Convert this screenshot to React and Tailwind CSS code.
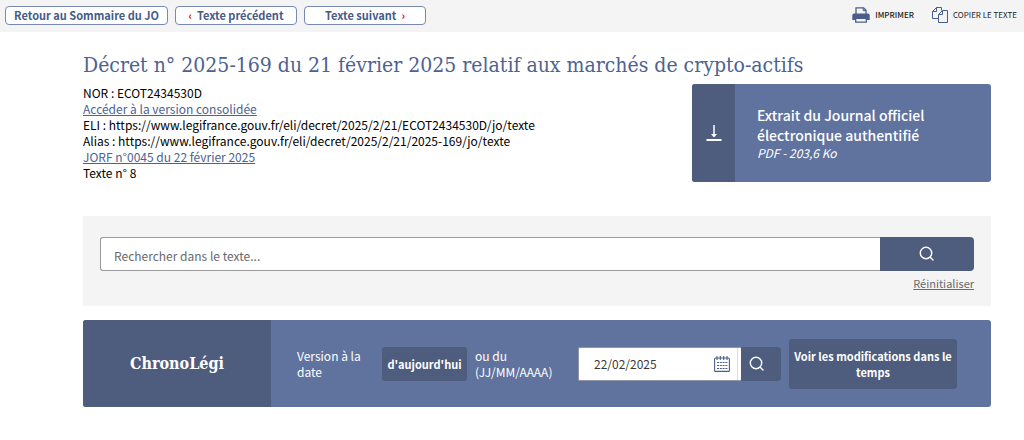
import React from "react";

const SLAB = "font-['Roboto_Slab','DejaVu_Serif_Condensed','DejaVu_Serif',serif]";

function SearchIcon({ className }) {
  return (
    <svg viewBox="0 0 16 16" className={className} fill="none" stroke="currentColor" strokeWidth="1.4" strokeLinecap="round" aria-hidden="true">
      <circle cx="7" cy="7" r="5.7" />
      <path d="M11.2 11.2 14 14" />
    </svg>
  );
}

function PrinterIcon() {
  return (
    <svg viewBox="0 0 18 16" className="h-4 w-[18px] text-[#4a5e8c]" aria-hidden="true">
      <path d="M4 7V.8h7.6L14 3.2V7" fill="#f4f4f4" stroke="currentColor" strokeWidth="1.3" />
      <path d="M11.2.8v2.8H14" fill="none" stroke="currentColor" strokeWidth="1" />
      <path d="M2 6.500h14a1.700 1.700 0 0 1 1.700 1.700v4.800H.3V8.200A1.700 1.700 0 0 1 2 6.500z" fill="currentColor" />
      <path d="M3.700 11.300h10.600v3.900H3.700z" fill="#f4f4f4" stroke="currentColor" strokeWidth="1.300" />
    </svg>
  );
}

function CopyIcon() {
  return (
    <svg viewBox="0 0 16 16" className="size-4 text-[#4a5e8c]" fill="none" stroke="currentColor" strokeWidth="1" aria-hidden="true">
      <path d="M6.500 11.500h-6v-7l4-4h5v3" />
      <path d="M4.500.5v4h-4" />
      <path d="M6.500 7.500l4-4h5v12h-9z" />
      <path d="M10.500 3.500v4h-4" />
    </svg>
  );
}

function DownloadIcon() {
  return (
    <svg viewBox="0 0 16 18" className="h-[18px] w-4" fill="none" stroke="currentColor" aria-hidden="true">
      <path d="M8 1v11" strokeWidth="1.500" />
      <path d="M5 10h6l-3 3.500z" fill="currentColor" stroke="none" />
      <path d="M.5 16h15" strokeWidth="1.800" />
    </svg>
  );
}

function CalendarIcon() {
  return (
    <svg viewBox="0 0 16 16" className="size-4 text-[#4a5e8c]" fill="none" stroke="currentColor" aria-hidden="true">
      <rect x=".6" y="2" width="14.800" height="13.400" rx="1" strokeWidth="1.100" />
      <path d="M3 0v4M6.300 0v4M9.700 0v4M13 0v4" strokeWidth="1.100" />
      <path d="M3 6.500h10.400M3 9.500h10.400M3 12.500h10.400" strokeWidth="1.200" strokeDasharray="2 .8" />
    </svg>
  );
}

function NavButton({ className, children }) {
  return (
    <button
      type="button"
      className={`flex h-[19px] items-center rounded-[4px] border border-[#7688b3] bg-white text-[11px] leading-4 font-bold text-[#465b88] ${className}`}
    >
      {children}
    </button>
  );
}

export default function App() {
  return (
    <div className="bg-white font-['Source_Sans_Pro','Noto_Sans_CJK_SC',sans-serif] text-[12px] leading-4 text-[#161616]">
      <header className="flex h-8 items-center justify-between bg-[#f4f4f4] pr-[7px] pb-0.5 pl-[5px]">
        <nav className="flex gap-[7px]" aria-label="Navigation du JO">
          <NavButton className="w-[163px] justify-end pr-2">Retour au Sommaire du JO</NavButton>
          <NavButton className="w-[122px] justify-center gap-[5px]">
            <span className="text-[#e1000f]">‹</span>Texte précédent
          </NavButton>
          <NavButton className="w-[122px] justify-center gap-[5px]">
            Texte suivant<span className="text-[#e1000f]">›</span>
          </NavButton>
        </nav>
        <div className="flex gap-[18px] text-[8px] leading-4 text-[#222]">
          <button type="button" className="flex items-center gap-[5px] font-medium">
            <PrinterIcon />
            IMPRIMER
          </button>
          <button type="button" className="flex items-center gap-[5px]">
            <CopyIcon />
            COPIER LE TEXTE
          </button>
        </div>
      </header>

      <main className="pt-[17px] pr-[33px] pb-8 pl-[83px]">
        <h1 className={`${SLAB} text-[21px] leading-8 text-[#4d6291]`}>
          Décret n° 2025-169 du 21 février 2025 relatif aux marchés de crypto-actifs
        </h1>

        <div className="mt-[3px] flex items-start justify-between gap-6">
          <div className="pt-px text-black">
            <p>NOR : ECOT2434530D</p>
            <p><a href="#consolidee" className="text-[#4d6291] underline">Accéder à la version consolidée</a></p>
            <p>ELI : https://www.legifrance.gouv.fr/eli/decret/2025/2/21/ECOT2434530D/jo/texte</p>
            <p>Alias : https://www.legifrance.gouv.fr/eli/decret/2025/2/21/2025-169/jo/texte</p>
            <p><a href="#jorf" className="text-[#4d6291] underline">JORF n°0045 du 22 février 2025</a></p>
            <p>Texte n° 8</p>
          </div>
          <a href="#pdf" className="flex h-[98px] w-[299px] shrink-0 overflow-hidden rounded-[3px] bg-[#60739e] text-white">
            <span className="flex w-[43px] items-center justify-center bg-[#4e5d7e]"><DownloadIcon /></span>
            <span className="flex flex-1 flex-col justify-center pl-[22px]">
              <span className="text-[14px] leading-5 font-medium">
                Extrait du Journal officiel
                <br />
                électronique authentifié
              </span>
              <span className="italic">PDF - 203,6 Ko</span>
            </span>
          </a>
        </div>

        <form className="mt-[34px] bg-[#f4f4f4] px-[17px] pt-[21px] pb-[14px]" onSubmit={(e) => e.preventDefault()}>
          <div className="flex h-[34px]">
            <input
              type="text"
              aria-label="Rechercher dans le texte"
              placeholder="Rechercher dans le texte..."
              className="min-w-0 flex-1 rounded-l-[3px] border border-r-0 border-[#9a9a9a] bg-white px-[13px] pt-1 placeholder:text-[#6a6a6a]"
            />
            <button type="submit" aria-label="Rechercher" className="flex w-[94px] items-center justify-center rounded-r-[4px] bg-[#4e5d7e] text-white">
              <SearchIcon className="size-4" />
            </button>
          </div>
          <div className="mt-1 flex justify-end">
            <button type="reset" className="text-[11px] leading-[17px] text-[#6a6a6a] underline">Réinitialiser</button>
          </div>
        </form>

        <section className="mt-[14px] flex h-[87px] overflow-hidden rounded-[3px] bg-[#60739e] text-white">
          <h2 className={`${SLAB} flex w-[188px] shrink-0 items-center justify-center bg-[#4e5d7e] text-[16px] leading-6 font-bold`}>
            ChronoLégi
          </h2>
          <form className="flex flex-1 items-center pr-[34px] pl-[26px]" onSubmit={(e) => e.preventDefault()}>
            <span className="w-[85px] shrink-0 pr-4">Version à la date</span>
            <button type="button" className="h-[34px] w-[85px] shrink-0 rounded-[3px] bg-[#4e5d7e] text-[11px] font-bold">
              d'aujourd'hui
            </button>
            <label htmlFor="version-date" className="ml-2 w-[103px] shrink-0">
              ou du
              <br />
              (JJ/MM/AAAA)
            </label>
            <div className="flex h-[34px] flex-1">
              <div className="flex flex-1 rounded-l-[2px] border border-r-0 border-[#8f95a3] bg-white">
                <input
                  id="version-date"
                  type="text"
                  defaultValue="22/02/2025"
                  className="w-0 min-w-0 flex-1 pl-[15px] text-[#3a3a3a]"
                />
                <button type="button" aria-label="Ouvrir le calendrier" className="mr-[3px] flex w-[31px] items-center justify-center border-r border-[#ddd]">
                  <CalendarIcon />
                </button>
              </div>
              <button type="submit" aria-label="Rechercher la version" className="flex w-10 items-center rounded-r-[4px] bg-[#4e5d7e] pl-2">
                <SearchIcon className="size-4" />
              </button>
            </div>
            <button type="button" className="ml-2 h-[50px] w-[168px] shrink-0 rounded-[3px] bg-[#4e5d7e] text-[11px] leading-4 font-bold">
              Voir les modifications dans le temps
            </button>
          </form>
        </section>
      </main>
    </div>
  );
}
